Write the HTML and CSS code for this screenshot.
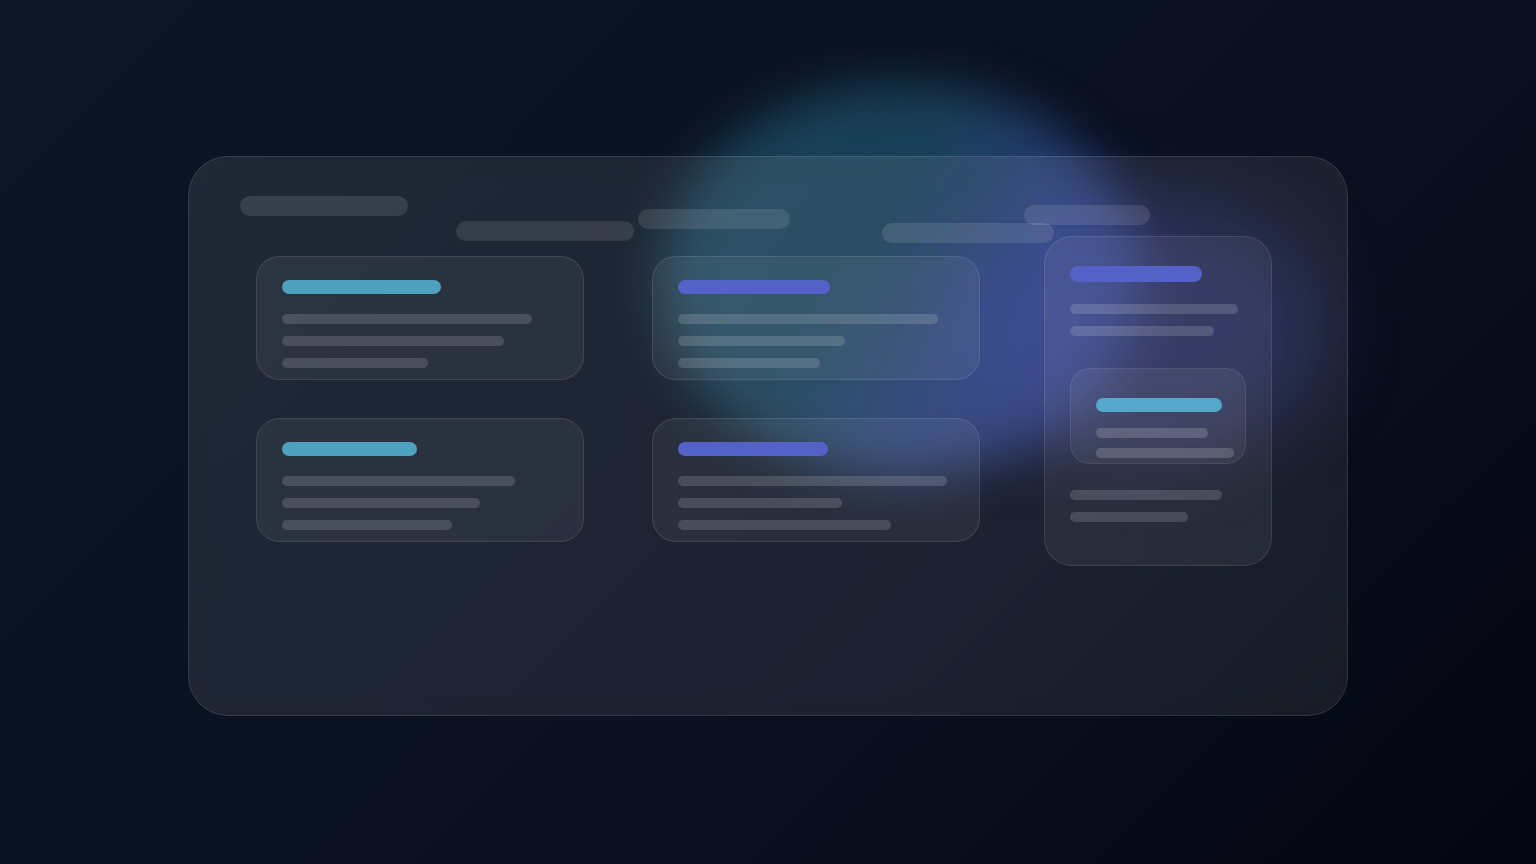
FILE: index.html
```html
<!DOCTYPE html>
<html lang="en">
<head>
<meta charset="utf-8">
<title>Dashboard skeleton</title>
<link rel="stylesheet" href="styles.css">
</head>
<body>
<div class="stage">
  <div class="glow">
    <div class="blob blob-teal"></div>
    <div class="blob blob-blue"></div>
  </div>
  <div class="panel">
    <div class="header">
      <div class="pill pill-1"></div>
      <div class="pill pill-2"></div>
      <div class="pill pill-3"></div>
      <div class="pill pill-4"></div>
      <div class="pill pill-5"></div>
    </div>
    <div class="body">
      <div class="grid">
        <div class="card">
          <div class="title cyan" style="width:159px"></div>
          <div class="line" style="width:250px"></div>
          <div class="line" style="width:222px"></div>
          <div class="line" style="width:146px"></div>
        </div>
        <div class="card">
          <div class="title indigo" style="width:152px"></div>
          <div class="line" style="width:260px"></div>
          <div class="line" style="width:167px"></div>
          <div class="line" style="width:142px"></div>
        </div>
        <div class="card">
          <div class="title cyan" style="width:135px"></div>
          <div class="line" style="width:233px"></div>
          <div class="line" style="width:198px"></div>
          <div class="line" style="width:170px"></div>
        </div>
        <div class="card">
          <div class="title indigo" style="width:150px"></div>
          <div class="line" style="width:269px"></div>
          <div class="line" style="width:164px"></div>
          <div class="line" style="width:213px"></div>
        </div>
      </div>
      <div class="side">
        <div class="title big indigo" style="width:132px"></div>
        <div class="line" style="width:168px"></div>
        <div class="line" style="width:144px"></div>
        <div class="inner">
          <div class="title cyan-bright" style="width:126px"></div>
          <div class="line light first" style="width:112px"></div>
          <div class="line light second" style="width:138px"></div>
        </div>
        <div class="line after" style="width:152px"></div>
        <div class="line" style="width:118px"></div>
      </div>
    </div>
  </div>
</div>
</body>
</html>
```

FILE: styles.css
```css
* { box-sizing: border-box; }

html, body {
  margin: 0;
  padding: 0;
  width: 1536px;
  height: 864px;
  overflow: hidden;
  font-family: "Inter", "Liberation Sans", sans-serif;
}

body {
  background: linear-gradient(135deg, #0b1626 0%, #0a1222 40%, #0a0f20 65%, #03060f 100%);
}

.stage {
  position: relative;
  width: 1536px;
  height: 864px;
  padding: 156px 0 0 188px;
}

.glow {
  position: absolute;
  inset: 0;
  pointer-events: none;
  z-index: 0;
}

.blob {
  position: absolute;
  border-radius: 50%;
}

.blob-teal {
  left: 660px;
  top: 84px;
  width: 480px;
  height: 392px;
  background: linear-gradient(120deg, rgba(34, 92, 118, 0.64) 0%, rgba(34, 92, 120, 0.62) 42%, rgba(54, 84, 165, 0.66) 66%, rgba(56, 74, 160, 0.6) 100%);
  filter: blur(24px);
}

.blob-blue {
  left: 965px;
  top: 200px;
  width: 360px;
  height: 260px;
  background: rgba(58, 68, 168, 0.34);
  filter: blur(38px);
}

.panel {
  position: relative;
  z-index: 1;
  width: 1160px;
  height: 560px;
  border-radius: 40px;
  border: 1px solid rgba(255, 255, 255, 0.1);
  background: linear-gradient(135deg, rgba(255, 255, 255, 0.085), rgba(255, 255, 255, 0.075));
  backdrop-filter: blur(10px);
  padding: 39px 0 0 51px;
}

.header {
  display: flex;
  align-items: flex-start;
  height: 40px;
}

.pill {
  height: 20px;
  border-radius: 10px;
  background: rgba(255, 255, 255, 0.11);
  flex: none;
}

.pill-1 { width: 168px; }
.pill-2 { width: 178px; margin: 25px 0 0 48px; }
.pill-3 { width: 152px; margin: 13px 0 0 4px; }
.pill-5 { width: 126px; margin: 9px 0 0 -30px; }
.pill-4 { width: 172px; margin: 27px 0 0 92px; position: relative; z-index: 1; }

.body {
  display: flex;
  align-items: flex-start;
  padding-left: 16px;
}

.grid {
  display: grid;
  grid-template-columns: 328px 328px;
  grid-auto-rows: 124px;
  column-gap: 68px;
  row-gap: 38px;
  margin-top: 20px;
}

.card {
  border-radius: 24px;
  border: 1px solid rgba(255, 255, 255, 0.1);
  background: rgba(255, 255, 255, 0.06);
  padding: 23px 25px 0;
  display: flex;
  flex-direction: column;
  align-items: flex-start;
}

.title {
  height: 14px;
  border-radius: 7px;
  flex: none;
}

.title.big {
  height: 16px;
  border-radius: 8px;
}

.cyan { background: #4fa2bf; }
.cyan-bright { background: #56a8ca; }
.indigo { background: #5462c8; }

.line {
  height: 10px;
  border-radius: 5px;
  background: rgba(255, 255, 255, 0.15);
  flex: none;
  margin-top: 12px;
}

.title + .line { margin-top: 20px; }

.side {
  width: 228px;
  height: 330px;
  margin-left: 64px;
  border-radius: 28px;
  border: 1px solid rgba(255, 255, 255, 0.1);
  background: rgba(255, 255, 255, 0.06);
  padding: 29px 25px 0;
  display: flex;
  flex-direction: column;
  align-items: flex-start;
}

.side .big + .line { margin-top: 22px; }

.inner {
  width: 176px;
  height: 96px;
  margin-top: 32px;
  border-radius: 20px;
  border: 1px solid rgba(255, 255, 255, 0.08);
  background: rgba(255, 255, 255, 0.06);
  padding: 29px 0 0 25px;
  display: flex;
  flex-direction: column;
  align-items: flex-start;
}

.line.light { background: rgba(255, 255, 255, 0.17); }
.inner .title + .line.first { margin-top: 16px; }
.line.second { margin-top: 10px; }

.line.after { margin-top: 26px; }
```
